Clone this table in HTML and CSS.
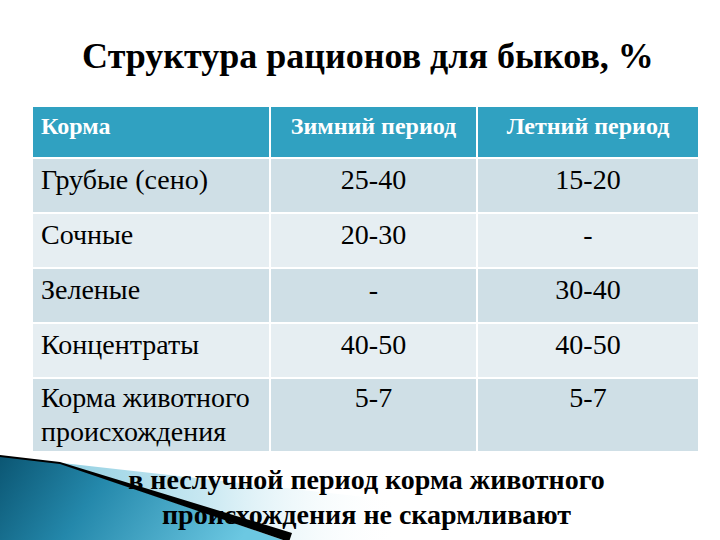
FILE: index.html
```html
<!DOCTYPE html>
<html lang="ru">
<head>
<meta charset="utf-8">
<link rel="stylesheet" href="styles.css">
</head>
<body>
<div class="slide">
  <h1 class="title">Структура рационов для быков, %</h1>
  <table class="ration">
    <colgroup>
      <col class="c1"><col class="c2"><col class="c3">
    </colgroup>
    <thead>
      <tr><th class="left">Корма</th><th>Зимний период</th><th>Летний период</th></tr>
    </thead>
    <tbody>
      <tr class="odd"><td class="left">Грубые (сено)</td><td>25-40</td><td>15-20</td></tr>
      <tr class="even"><td class="left">Сочные</td><td>20-30</td><td>-</td></tr>
      <tr class="odd"><td class="left">Зеленые</td><td>-</td><td>30-40</td></tr>
      <tr class="even"><td class="left">Концентраты</td><td>40-50</td><td>40-50</td></tr>
      <tr class="odd tall"><td class="left">Корма животного происхождения</td><td>5-7</td><td>5-7</td></tr>
    </tbody>
  </table>
  <div class="note-wrap">
    <svg class="deco" width="400" height="90" viewBox="0 450 400 90" aria-hidden="true">
      <defs>
        <linearGradient id="lite" x1="0" y1="0" x2="1" y2="0">
          <stop offset="0" stop-color="#7cc6dc"/>
          <stop offset="0.5" stop-color="#c6e7f1"/>
          <stop offset="1" stop-color="#ffffff" stop-opacity="0"/>
        </linearGradient>
        <linearGradient id="teal" x1="0" y1="0" x2="1" y2="0.2">
          <stop offset="0" stop-color="#0b5673"/>
          <stop offset="0.4" stop-color="#2488ab"/>
          <stop offset="1" stop-color="#6cc8e2"/>
        </linearGradient>
      </defs>
      <polygon points="0,455 400,500 400,540 0,540" fill="url(#lite)"/>
      <polygon points="0,455 60,462 286,540 0,540" fill="url(#teal)"/>
      <polygon points="0,454 60,461 292,532 289,541 60,463 0,456" fill="#000"/>
    </svg>
    <p class="note">в неслучной период корма животного<br>происхождения не скармливают</p>
  </div>
</div>
</body>
</html>
```
FILE: styles.css
```css
html, body {
  margin: 0;
  padding: 0;
  background: #ffffff;
}
.slide {
  width: 720px;
  height: 540px;
  position: relative;
  overflow: hidden;
  font-family: "Liberation Serif", "Times New Roman", serif;
  color: #000;
}
.title {
  margin: 0;
  padding-top: 36px;
  padding-left: 16px;
  height: 107px;
  box-sizing: border-box;
  text-align: center;
  font-size: 36px;
  font-weight: bold;
  line-height: 40px;
}
.ration {
  margin-left: 33px;
  width: 665px;
  border-collapse: collapse;
  table-layout: fixed;
}
.c1 { width: 237px; }
.c2 { width: 207px; }
.c3 { width: 221px; }
.ration th, .ration td {
  border: 2px solid #ffffff;
  text-align: center;
  vertical-align: top;
}
.ration th {
  background: #30a1c1;
  color: #ffffff;
  font-weight: bold;
  font-size: 24px;
  height: 51px;
  padding: 5px 8px 0;
  box-sizing: border-box;
  line-height: 28px;
}
.ration td {
  font-size: 28px;
  line-height: 34px;
  height: 55px;
  padding: 4px 8px 0;
  box-sizing: border-box;
}
.ration .left { text-align: left; }
.ration tr.odd td { background: #cfdfe6; }
.ration tr.even td { background: #e6eef2; }
.ration tr.tall td { height: 73px; padding-top: 2px; }
.ration tbody tr:last-child td { border-bottom: none; }
.ration th { border-top: none; }
.ration tr > :first-child { border-left: none; }
.ration tr > :last-child { border-right: none; }
.note-wrap {
  position: relative;
  height: 90px;
}
.deco {
  position: absolute;
  left: 0;
  bottom: 0;
}
.note {
  position: relative;
  margin: 0;
  padding-top: 11px;
  padding-left: 13px;
  text-align: center;
  font-size: 28px;
  font-weight: bold;
  line-height: 35px;
}
```
